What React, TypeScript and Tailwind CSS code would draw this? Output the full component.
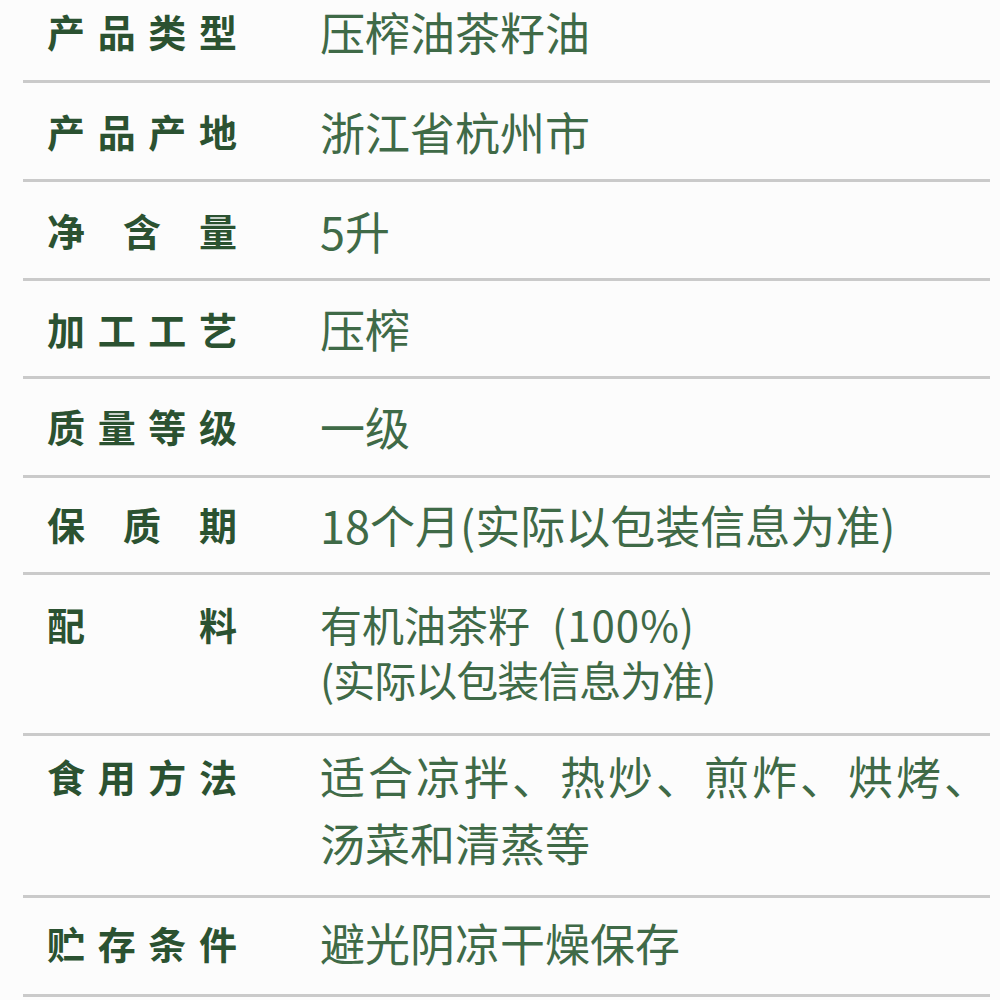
import * as React from "react"

const ROWS = [
  { label: "产品类型", lines: ["压榨油茶籽油"], h: "h-[83px] pb-[18px]" },
  { label: "产品产地", lines: ["浙江省杭州市"], h: "h-[99px]" },
  { label: "净含量", lines: ["5升"], h: "h-[99px]" },
  { label: "加工工艺", lines: ["压榨"], h: "h-[98px]" },
  { label: "质量等级", lines: ["一级"], h: "h-[99px] pb-[2px]" },
  { label: "保质期", lines: ["18个月(实际以包装信息为准)"], h: "h-[97px] pb-[2px]" },
]

function Label({ text, leading }: { text: string; leading: string }) {
  return (
    <div className={`w-[190px] shrink-0 flex justify-between font-bold text-[38px] text-[#2b5231] ${leading}`}>
      {text.split("").map((c, i) => (
        <span key={i}>{c}</span>
      ))}
    </div>
  )
}

export default function App() {
  return (
    <div
      className="w-[1000px] h-[1000px] bg-[#fcfcfc] overflow-hidden pl-[23px]"
      style={{ fontFamily: '"Noto Sans CJK SC", "Noto Sans", sans-serif' }}
    >
      <div className="w-[967px]">
        {ROWS.map((r) => (
          <div key={r.label} className={`flex items-center border-b-[3px] border-[#cacaca] pl-[24px] ${r.h}`}>
            <Label text={r.label} leading="leading-[50px]" />
            <div className="ml-[83px] text-[45px] leading-[55px] text-[#3f6a47] whitespace-nowrap">
              {r.lines[0]}
            </div>
          </div>
        ))}

        {/* 配料: two lines, slightly smaller text */}
        <div className="flex items-start border-b-[3px] border-[#cacaca] pl-[24px] h-[161px] pt-[21px]">
          <Label text="配料" leading="leading-[55px]" />
          <div className="ml-[83px] text-[42px] leading-[55px] text-[#3f6a47] whitespace-nowrap">
            <div>
              有机油茶籽<span className="ml-[22px] tracking-[1px]">(100%)</span>
            </div>
            <div className="tracking-[-1px]">(实际以包装信息为准)</div>
          </div>
        </div>

        <div className="flex items-start border-b-[3px] border-[#cacaca] pl-[24px] h-[162px] pt-[6px]">
          <Label text="食用方法" leading="leading-[67px]" />
          <div className="ml-[83px] text-[45px] leading-[67px] text-[#3f6a47] whitespace-nowrap">
            <div className="tracking-[3px]">适合凉拌、热炒、煎炸、烘烤、</div>
            <div>汤菜和清蒸等</div>
          </div>
        </div>

        <div className="flex items-center border-b-[3px] border-[#cacaca] pl-[24px] h-[99px] pb-[7px]">
          <Label text="贮存条件" leading="leading-[50px]" />
          <div className="ml-[83px] text-[45px] leading-[55px] text-[#3f6a47] whitespace-nowrap">
            避光阴凉干燥保存
          </div>
        </div>
      </div>
    </div>
  )
}
